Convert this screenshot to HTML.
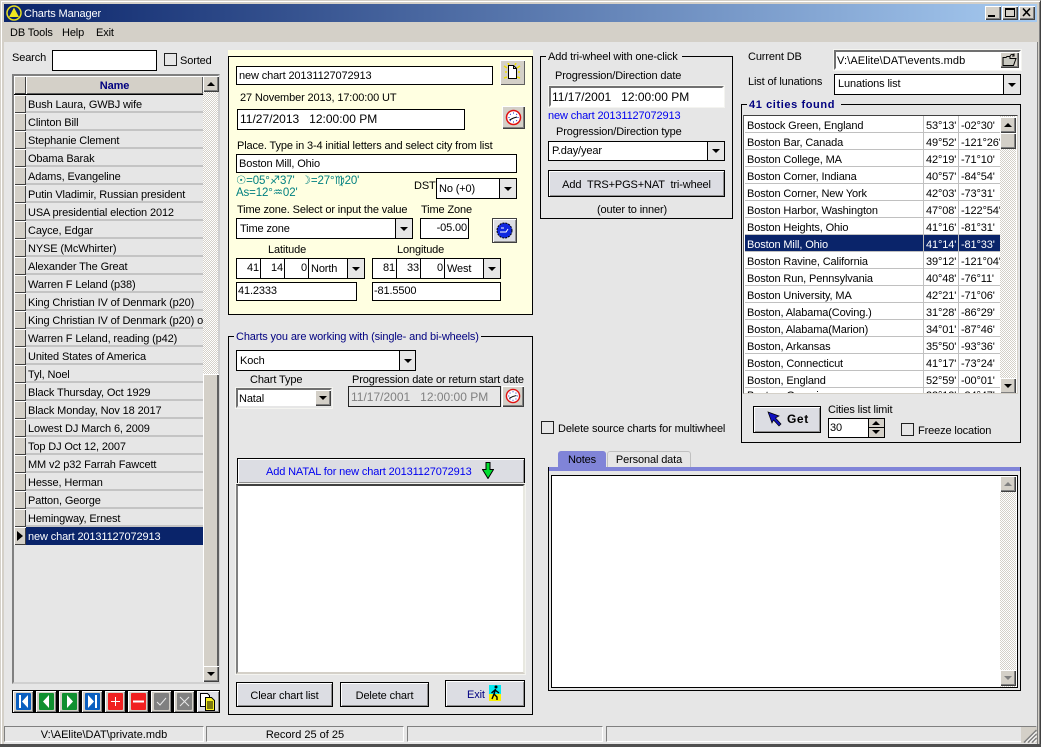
<!DOCTYPE html>
<html><head><meta charset="utf-8"><title>Charts Manager</title>
<style>
html,body{margin:0;padding:0}
body{width:1041px;height:747px;position:relative;overflow:hidden;background:#d4d0c8;font:11px/16px "Liberation Sans",Arial,sans-serif;letter-spacing:-.13px;color:#000}
div,svg{position:absolute;box-sizing:border-box}
.t{white-space:pre;height:16px}
.i{background:#fff;border:1px solid #000;white-space:pre;padding-left:2px;overflow:hidden}
.s{background:#fff;border:2px solid;border-color:#606060 #fff #fff #606060;outline:1px solid #f4f4f0;white-space:pre;padding-left:1px;overflow:hidden}
.r{background:#d4d0c8;box-shadow:inset 1px 1px #fff,inset -1px -1px #404040,inset -2px -2px #808080}
.b{background:#dcdde3;border:1px solid #000;box-shadow:inset 1px 1px #fff,inset -1px -1px #909090;text-align:center}
.g{border:1px solid #000}
.cb{background:#e6e6e6;border-left:1px solid #000}
.tri{width:0;height:0;border-left:4px solid transparent;border-right:4px solid transparent;border-top:4px solid #000}
.up{width:0;height:0;border-left:4px solid transparent;border-right:4px solid transparent;border-bottom:4px solid #000}
.d{background:repeating-conic-gradient(#fff 0 25%,#d4d0c8 0 50%) 0 0/2px 2px}
.n{left:26px;width:177px;height:18px;border-bottom:2px solid #c4c4c4;padding:2px 0 0 2px;white-space:pre;overflow:hidden}
.x{left:14px;width:12px;height:18px;background:#d4d0c8;box-shadow:inset 1px 1px #fff,inset -1px -1px #404040}
.c{height:17px;border-bottom:1px solid #c0c0c0;white-space:pre;overflow:hidden;padding:2px 0 0 2px;background:#fff}
.cl{width:1px;background:#c0c0c0}
.bt{background:#d4d0c8;width:22px;height:23px;top:690px;box-shadow:inset 1px 1px #fff,inset -1px -1px #808080;border:1px solid #000}
.st{height:16px;top:726px;border:1px solid;border-color:#808080 #fff #fff #808080;text-align:center;white-space:pre;letter-spacing:0;line-height:16px}
.dt{font-size:12px;letter-spacing:0}
</style></head><body>

<!-- frame -->
<div style="left:0;top:0;width:1041px;height:747px;border:1px solid;border-color:#d4d0c8 #404040 #404040 #d4d0c8;box-shadow:inset 1px 1px #fff,inset -1px -1px #808080"></div>
<!-- title -->
<div style="left:4px;top:4px;width:1033px;height:18px;background:linear-gradient(90deg,#0a246a,#a6caf0)"></div>
<svg style="left:6px;top:5px" width="16" height="16" viewBox="0 0 16 16"><circle cx="8" cy="8" r="7" fill="#0a246a" stroke="#e8e020" stroke-width="1.5"/><path d="M8 2.500L13 12H3Z" fill="#f0e820"/></svg>
<div class="t" style="left:24px;top:6px;color:#fff">Charts Manager</div>
<div class="r" style="left:985px;top:6px;width:16px;height:14px"></div><div style="left:988px;top:15px;width:7px;height:2px;background:#000"></div>
<div class="r" style="left:1002px;top:6px;width:16px;height:14px"></div><div style="left:1005px;top:8px;width:10px;height:9px;border:1px solid #000;border-top-width:2px"></div>
<div class="r" style="left:1019px;top:6px;width:16px;height:14px"></div>
<svg style="left:1022px;top:8px" width="10" height="9" viewBox="0 0 10 9"><path d="M1 0.500L8 8M8 0.500L1 8" stroke="#000" stroke-width="1.6" fill="none"/></svg>
<!-- menu -->
<div class="t" style="left:10px;top:25px">DB Tools</div>
<div class="t" style="left:62px;top:25px">Help</div>
<div class="t" style="left:96px;top:25px">Exit</div>
<!-- client -->
<div style="left:4px;top:42px;width:1033px;height:703px;background:#e6e6e6"></div>

<!-- search -->
<div class="t" style="left:12px;top:50px">Search</div>
<div class="i" style="left:52px;top:50px;width:105px;height:21px"></div>
<div class="g" style="left:164px;top:53px;width:13px;height:13px;border-color:#202020"></div>
<div class="t" style="left:180px;top:53px">Sorted</div>

<!-- grid -->
<div style="left:12px;top:74px;width:208px;height:610px;border:2px solid #808080;border-right-color:#d0d0d0;border-bottom-color:#d0d0d0"></div>
<div class="x" style="top:76px;height:18px"></div>
<div class="r" style="left:26px;top:76px;width:177px;height:18px;text-align:center;font-weight:bold;color:#000080;padding-top:2px;box-shadow:inset 1px 1px #fff,inset -1px -1px #606060">Name</div>
<div style="left:14px;top:94px;width:189px;height:1px;background:#000"></div>
<div class="d" style="left:203px;top:76px;width:15px;height:606px"></div>
<div class="r" style="left:203px;top:76px;width:16px;height:16px"></div><div class="up" style="left:207px;top:82px"></div>
<div class="r" style="left:203px;top:374px;width:16px;height:292px;box-shadow:inset 1px 1px #fff,inset -2px 0 #606060"></div>
<div class="r" style="left:203px;top:666px;width:16px;height:16px"></div><div class="tri" style="left:207px;top:672px"></div>

<div class="x" style="top:95px"></div><div class="n" style="top:95px">Bush Laura, GWBJ wife</div>
<div class="x" style="top:113px"></div><div class="n" style="top:113px">Clinton Bill</div>
<div class="x" style="top:131px"></div><div class="n" style="top:131px">Stephanie Clement</div>
<div class="x" style="top:149px"></div><div class="n" style="top:149px">Obama Barak</div>
<div class="x" style="top:167px"></div><div class="n" style="top:167px">Adams, Evangeline</div>
<div class="x" style="top:185px"></div><div class="n" style="top:185px">Putin Vladimir, Russian president</div>
<div class="x" style="top:203px"></div><div class="n" style="top:203px">USA presidential election 2012</div>
<div class="x" style="top:221px"></div><div class="n" style="top:221px">Cayce, Edgar</div>
<div class="x" style="top:239px"></div><div class="n" style="top:239px">NYSE (McWhirter)</div>
<div class="x" style="top:257px"></div><div class="n" style="top:257px">Alexander The Great</div>
<div class="x" style="top:275px"></div><div class="n" style="top:275px">Warren F Leland (p38)</div>
<div class="x" style="top:293px"></div><div class="n" style="top:293px">King Christian IV of Denmark (p20)</div>
<div class="x" style="top:311px"></div><div class="n" style="top:311px">King Christian IV of Denmark (p20) ol</div>
<div class="x" style="top:329px"></div><div class="n" style="top:329px">Warren F Leland, reading (p42)</div>
<div class="x" style="top:347px"></div><div class="n" style="top:347px">United States of America</div>
<div class="x" style="top:365px"></div><div class="n" style="top:365px">Tyl, Noel</div>
<div class="x" style="top:383px"></div><div class="n" style="top:383px">Black Thursday, Oct 1929</div>
<div class="x" style="top:401px"></div><div class="n" style="top:401px">Black Monday, Nov 18 2017</div>
<div class="x" style="top:419px"></div><div class="n" style="top:419px">Lowest DJ March 6, 2009</div>
<div class="x" style="top:437px"></div><div class="n" style="top:437px">Top DJ Oct 12, 2007</div>
<div class="x" style="top:455px"></div><div class="n" style="top:455px">MM v2 p32 Farrah Fawcett</div>
<div class="x" style="top:473px"></div><div class="n" style="top:473px">Hesse, Herman</div>
<div class="x" style="top:491px"></div><div class="n" style="top:491px">Patton, George</div>
<div class="x" style="top:509px"></div><div class="n" style="top:509px">Hemingway, Ernest</div>
<div class="x" style="top:527px"></div><div style="left:17px;top:531px;width:0;height:0;border-top:5px solid transparent;border-bottom:5px solid transparent;border-left:6px solid #000"></div>
<div class="n" style="top:527px;background:#0a246a;color:#fff;border-bottom:0">new chart 20131127072913</div>

<!-- nav -->
<div style="left:12px;top:690px;width:208px;height:23px;background:#000"></div>
<div class="bt" style="left:12px"></div><svg style="left:16px;top:693px" width="15" height="17" viewBox="0 0 15 17"><rect width="15" height="17" rx="1" fill="#0a5fc0"/><path d="M3 2h2v13H3zM12 2v13L6 8.500Z" fill="#fff"/></svg>
<div class="bt" style="left:35px"></div><svg style="left:39px;top:693px" width="15" height="17" viewBox="0 0 15 17"><rect width="15" height="17" rx="1" fill="#109030"/><path d="M10 2v13L4 8.500Z" fill="#fff"/></svg>
<div class="bt" style="left:58px"></div><svg style="left:62px;top:693px" width="15" height="17" viewBox="0 0 15 17"><rect width="15" height="17" rx="1" fill="#109030"/><path d="M5 2v13l6-6.500Z" fill="#fff"/></svg>
<div class="bt" style="left:81px"></div><svg style="left:85px;top:693px" width="15" height="17" viewBox="0 0 15 17"><rect width="15" height="17" rx="1" fill="#0a5fc0"/><path d="M10 2h2v13h-2zM3 2v13l6-6.500Z" fill="#fff"/></svg>
<div class="bt" style="left:104px"></div><svg style="left:108px;top:693px" width="15" height="17" viewBox="0 0 15 17"><rect width="15" height="17" rx="1" fill="#f02020"/><path d="M7 4h1v4h4v1H8v4H7V9H3V8h4Z" fill="#fff"/></svg>
<div class="bt" style="left:127px"></div><svg style="left:131px;top:693px" width="15" height="17" viewBox="0 0 15 17"><rect width="15" height="17" rx="1" fill="#f02020"/><path d="M2 7.500h11v2H2Z" fill="#fff"/></svg>
<div class="bt" style="left:150px"></div><svg style="left:154px;top:693px" width="15" height="17" viewBox="0 0 15 17"><rect width="15" height="17" rx="1" fill="#808080"/><path d="M3 9l3 3 6-7" stroke="#e8e8e8" fill="none"/></svg>
<div class="bt" style="left:173px"></div><svg style="left:177px;top:693px" width="15" height="17" viewBox="0 0 15 17"><rect width="15" height="17" rx="1" fill="#808080"/><path d="M3 4l9 9M12 4l-9 9" stroke="#e8e8e8" fill="none"/></svg>
<div class="bt" style="left:196px;width:24px;background:#dcdde3"></div>
<svg style="left:199px;top:692px" width="18" height="20" viewBox="0 0 18 20"><path d="M1.500 1.500h7l2 2v11h-9Z" fill="#fff" stroke="#000"/><path d="M6.500 5.500h6l3 3v10h-9Z" fill="#f8f020" stroke="#000"/><path d="M8 10h6M8 12h6M8 14h6M8 16h6" stroke="#000"/></svg>

<!-- yellow panel -->
<div style="left:228px;top:50px;width:305px;height:8px;background:#ffffe1"></div>
<div style="left:228px;top:56px;width:305px;height:259px;background:#ffffe1;border:1px solid #000"></div>
<div class="i" style="left:236px;top:66px;width:257px;height:19px;padding-top:1px">new chart 20131127072913</div>
<div class="b" style="left:500px;top:60px;width:25px;height:25px;background:#d4d0c8;border:0;box-shadow:inset 1px 1px #fff,inset -1px -1px #606060"></div>
<svg style="left:503px;top:63px" width="19" height="19" viewBox="0 0 19 19"><path d="M1 3l3 2M17 3l-3 2M1 15l3-1M17 15l-3-1M2 9h2M15 9h2M5 0l1 2M13 0l-1 2" stroke="#f0e000" stroke-width="1.500"/><path d="M5.500 2.500h5l3 3v10h-8Z" fill="#fff" stroke="#000"/><path d="M10.500 2.500v3h3" fill="none" stroke="#000"/></svg>
<div class="t" style="left:240px;top:90px">27 November 2013, 17:00:00 UT</div>
<div class="i dt" style="left:237px;top:109px;width:228px;height:21px;padding-top:1px">11/27/2013   12:00:00 PM</div>
<div class="r" style="left:502px;top:106px;width:23px;height:23px"></div>
<svg style="left:505px;top:109px" width="17" height="17" viewBox="0 0 17 17"><circle cx="8.500" cy="8.500" r="7" fill="#fff" stroke="#e01010" stroke-width="1.500"/><path d="M8.500 9L4.500 11M8.500 9L12 8" stroke="#000"/><path d="M8.500 3.500v1M8.500 12.500v1M3.500 8.500h1M12.500 8.500h1M5 5l.7.7M12 5l-.7.7M5 12l.7-.7M12 12l-.7-.7" stroke="#1020c0"/></svg>
<div class="t" style="left:237px;top:138px">Place. Type in 3-4 initial letters and select city from list</div>
<div class="i" style="left:236px;top:154px;width:281px;height:19px;padding-top:1px">Boston Mill, Ohio</div>
<div class="t" style="left:236px;top:173px;color:#008080;font-size:11.5px;font-family:'Liberation Sans','DejaVu Sans',sans-serif">☉=05°♐37'  ☽=27°♍20'</div>
<div class="t" style="left:236px;top:185px;color:#008080;font-size:11.5px;font-family:'Liberation Sans','DejaVu Sans',sans-serif">As=12°♒02'</div>
<div class="t" style="left:414px;top:178px">DST</div>
<div class="i" style="left:436px;top:178px;width:81px;height:21px;padding-top:2px">No (+0)<div class="cb" style="left:62px;top:0;width:17px;height:19px"><div class="tri" style="left:4px;top:8px"></div></div></div>
<div class="t" style="left:237px;top:202px">Time zone. Select or input the value</div>
<div class="t" style="left:421px;top:202px">Time Zone</div>
<div class="i" style="left:236px;top:218px;width:177px;height:21px;padding:2px 0 0 3px">Time zone<div class="cb" style="left:158px;top:0;width:17px;height:19px"><div class="tri" style="left:4px;top:8px"></div></div></div>
<div class="i" style="left:420px;top:218px;width:49px;height:21px;text-align:right;padding:1px 1px 0 0">-05.00</div>
<div class="b" style="left:492px;top:218px;width:25px;height:25px;border:1px solid #404040"></div>
<svg style="left:496px;top:222px" width="17" height="17" viewBox="0 0 17 17"><circle cx="8.500" cy="8.500" r="7.500" fill="#1028e0" stroke="#000" stroke-dasharray="2 1"/><path d="M4 10h6l2-3M5 6h3" stroke="#fff" fill="none"/></svg>
<div class="t" style="left:268px;top:242px">Latitude</div>
<div class="t" style="left:397px;top:242px">Longitude</div>

<div class="i" style="left:236px;top:258px;width:129px;height:21px"></div>
<div class="t" style="left:236px;top:260px;width:24px;text-align:right;padding-right:1px">41</div><div style="left:260px;top:258px;width:1px;height:21px;background:#000"></div>
<div class="t" style="left:260px;top:260px;width:24px;text-align:right;padding-right:1px">14</div><div style="left:284px;top:258px;width:1px;height:21px;background:#000"></div>
<div class="t" style="left:284px;top:260px;width:24px;text-align:right;padding-right:1px">0</div><div style="left:308px;top:258px;width:1px;height:21px;background:#000"></div>
<div class="t" style="left:311px;top:261px">North</div>
<div class="cb" style="left:347px;top:259px;width:17px;height:19px"><div class="tri" style="left:4px;top:8px"></div></div>

<div class="i" style="left:372px;top:258px;width:129px;height:21px"></div>
<div class="t" style="left:372px;top:260px;width:24px;text-align:right;padding-right:1px">81</div><div style="left:396px;top:258px;width:1px;height:21px;background:#000"></div>
<div class="t" style="left:396px;top:260px;width:24px;text-align:right;padding-right:1px">33</div><div style="left:420px;top:258px;width:1px;height:21px;background:#000"></div>
<div class="t" style="left:420px;top:260px;width:24px;text-align:right;padding-right:1px">0</div><div style="left:444px;top:258px;width:1px;height:21px;background:#000"></div>
<div class="t" style="left:447px;top:261px">West</div>
<div class="cb" style="left:483px;top:259px;width:17px;height:19px"><div class="tri" style="left:4px;top:8px"></div></div>

<div class="i" style="left:236px;top:282px;width:121px;height:19px;padding:0 0 0 1px">41.2333</div>
<div class="i" style="left:372px;top:282px;width:129px;height:19px;padding:0 0 0 1px">-81.5500</div>

<!-- charts group -->
<div class="g" style="left:228px;top:336px;width:305px;height:379px"></div>
<div class="t" style="left:234px;top:330px;padding:0 2px;background:#e6e6e6;color:#000080;height:14px;line-height:14px">Charts you are working with (single- and bi-wheels)</div>
<div class="i" style="left:236px;top:350px;width:180px;height:21px;padding:2px 0 0 3px">Koch<div class="cb" style="left:162px;top:0;width:16px;height:19px"><div class="tri" style="left:4px;top:8px"></div></div></div>
<div class="t" style="left:250px;top:372px">Chart Type</div>
<div class="s" style="left:236px;top:388px;width:96px;height:20px;border-color:#707070 #e6e6e6 #e6e6e6 #707070;padding:1px 0 0 1px">Natal</div>
<div class="r" style="left:315px;top:390px;width:16px;height:16px"></div><div class="tri" style="left:319px;top:396px"></div>
<div class="t" style="left:352px;top:372px">Progression date or return start date</div>
<div class="i dt" style="left:348px;top:386px;width:153px;height:21px;background:#e6e6e6;color:#808080;padding-top:2px;border-color:#222">11/17/2001   12:00:00 PM</div>
<div class="r" style="left:502px;top:386px;width:22px;height:21px"></div>
<svg style="left:505px;top:388px" width="16" height="16" viewBox="0 0 17 17"><circle cx="8.500" cy="8.500" r="7" fill="#fff" stroke="#e01010" stroke-width="1.500"/><path d="M8.500 9L4.500 11M8.500 9L12 8" stroke="#000"/><path d="M8.500 3.500v1M8.500 12.500v1M3.500 8.500h1M12.500 8.500h1M5 5l.7.7M12 5l-.7.7M5 12l.7-.7M12 12l-.7-.7" stroke="#1020c0"/></svg>
<div class="b" style="left:237px;top:458px;width:288px;height:26px;text-align:left;padding:5px 0 0 28px;color:#0000f0">Add NATAL for new chart 20131127072913</div>
<svg style="left:482px;top:462px" width="12" height="17" viewBox="0 0 12 17"><path d="M4 .5h4v7h3.500L6 16.500.5 7.500H4Z" fill="#00e030" stroke="#000"/></svg>
<div class="s" style="left:236px;top:484px;width:289px;height:190px;border-color:#404040 #e8e8e0 #d4d0c8 #808080"></div>
<div class="b" style="left:236px;top:682px;width:97px;height:25px;padding-top:5px">Clear chart list</div>
<div class="b" style="left:340px;top:682px;width:89px;height:25px;padding-top:5px">Delete chart</div>
<div class="b" style="left:445px;top:680px;width:80px;height:27px;text-align:left;padding:6px 0 0 21px;color:#000080">Exit</div>
<svg style="left:489px;top:685px" width="12" height="16" viewBox="0 0 12 16"><rect width="12" height="9" fill="#00e8f0"/><rect y="9" width="12" height="7" fill="#f8f000"/><circle cx="7" cy="2" r="1.500" fill="#000"/><path d="M6.500 4L5 9l3 3v3M5 9l-2 5M6 5L2.500 8M6 5l4 3" stroke="#000" stroke-width="1.400" fill="none"/></svg>

<!-- tri-wheel group -->
<div class="g" style="left:540px;top:56px;width:193px;height:163px"></div>
<div class="t" style="left:546px;top:50px;padding:0 4px 0 2px;background:#e6e6e6;height:14px;line-height:14px">Add tri-wheel with one-click</div>
<div class="t" style="left:555px;top:68px">Progression/Direction date</div>
<div class="s dt" style="left:549px;top:86px;width:175px;height:21px;padding-top:1px;border-color:#707070 #fff #fff #707070">11/17/2001   12:00:00 PM</div>
<div class="t" style="left:548px;top:108px;color:#0000f0">new chart 20131127072913</div>
<div class="t" style="left:556px;top:124px">Progression/Direction type</div>
<div class="i" style="left:548px;top:141px;width:177px;height:20px;padding:1px 0 0 3px">P.day/year<div class="cb" style="left:158px;top:0;width:17px;height:18px"><div class="tri" style="left:4px;top:7px"></div></div></div>
<div class="b" style="left:548px;top:170px;width:177px;height:27px;padding-top:6px;white-space:pre">Add  TRS+PGS+NAT  tri-wheel</div>
<div class="t" style="left:597px;top:202px">(outer to inner)</div>

<div class="g" style="left:541px;top:421px;width:13px;height:13px;border-color:#202020"></div>
<div class="t" style="left:558px;top:421px">Delete source charts for multiwheel</div>

<!-- tabs -->
<div style="left:558px;top:451px;width:48px;height:16px;background:#8084d8;border-radius:3px 3px 0 0;text-align:center;padding-top:1px">Notes</div>
<div style="left:607px;top:451px;width:84px;height:16px;border:1px solid #c0c0c0;border-bottom:0;border-radius:3px 3px 0 0;text-align:center">Personal data</div>
<div style="left:548px;top:467px;width:473px;height:4px;background:#8084d8"></div>
<div style="left:548px;top:467px;width:473px;height:224px;border:1px solid #000;border-top:0"></div>
<div style="left:551px;top:475px;width:467px;height:213px;border:1px solid #000;background:#fff"></div>
<div class="d" style="left:1000px;top:476px;width:16px;height:211px"></div>
<div class="r" style="left:1000px;top:476px;width:16px;height:16px"></div><div class="up" style="left:1004px;top:482px;border-bottom-color:#808080"></div>
<div class="r" style="left:1000px;top:670px;width:16px;height:16px"></div><div class="tri" style="left:1004px;top:676px;border-top-color:#808080"></div>

<!-- right top -->
<div class="t" style="left:748px;top:49px">Current DB</div>
<div class="s" style="left:834px;top:50px;width:187px;height:20px;letter-spacing:.1px;padding-top:1px;border-color:#707070 #fff #fff #707070">V:\AElite\DAT\events.mdb</div>
<div class="r" style="left:1000px;top:52px;width:19px;height:16px"></div>
<svg style="left:1002px;top:53px" width="15" height="14" viewBox="0 0 15 14"><path d="M1 12.500V4.500h3l1-1h3v2h6l-2.500 7Z" fill="#c8c8c0" stroke="#000"/><path d="M8 3c1-2 3-2 4-1M12 .5V3h-2" stroke="#000" fill="none"/></svg>
<div class="t" style="left:748px;top:74px">List of lunations</div>
<div class="i" style="left:834px;top:74px;width:187px;height:21px;padding:1px 0 0 3px">Lunations list<div class="cb" style="left:168px;top:0;width:17px;height:19px"><div class="tri" style="left:4px;top:8px"></div></div></div>

<!-- cities group -->
<div class="g" style="left:741px;top:104px;width:280px;height:339px"></div>
<div class="t" style="left:747px;top:98px;padding:0 6px 0 2px;background:#e6e6e6;color:#000080;font-weight:bold;letter-spacing:.6px;height:14px;line-height:14px">41 cities found</div>
<div style="left:743px;top:115px;width:275px;height:279px;background:#fff;border:1px solid;border-color:#404040 #d4d0c8 #d4d0c8 #606060;overflow:hidden">
<div class="c" style="left:1px;top:0;width:255px">Bostock Green, England</div>
<div class="c" style="left:1px;top:17px;width:255px">Boston Bar, Canada</div>
<div class="c" style="left:1px;top:34px;width:255px">Boston College, MA</div>
<div class="c" style="left:1px;top:51px;width:255px">Boston Corner, Indiana</div>
<div class="c" style="left:1px;top:68px;width:255px">Boston Corner, New York</div>
<div class="c" style="left:1px;top:85px;width:255px">Boston Harbor, Washington</div>
<div class="c" style="left:1px;top:102px;width:255px">Boston Heights, Ohio</div>
<div class="c" style="left:1px;top:119px;width:255px;background:#0a246a;color:#fff">Boston Mill, Ohio</div>
<div class="c" style="left:1px;top:136px;width:255px">Boston Ravine, California</div>
<div class="c" style="left:1px;top:153px;width:255px">Boston Run, Pennsylvania</div>
<div class="c" style="left:1px;top:170px;width:255px">Boston University, MA</div>
<div class="c" style="left:1px;top:187px;width:255px">Boston, Alabama(Coving.)</div>
<div class="c" style="left:1px;top:204px;width:255px">Boston, Alabama(Marion)</div>
<div class="c" style="left:1px;top:221px;width:255px">Boston, Arkansas</div>
<div class="c" style="left:1px;top:238px;width:255px">Boston, Connecticut</div>
<div class="c" style="left:1px;top:255px;width:255px">Boston, England</div>
<div class="c" style="left:1px;top:272px;width:255px;padding-top:0">Boston, Georgia</div>
<div class="cl" style="left:179px;top:0;height:279px"></div>
<div class="cl" style="left:214px;top:0;height:279px"></div>
<div style="left:0;top:1px">
<div class="t" style="left:182px;top:1px">53°13'</div><div class="t" style="left:217px;top:1px;width:39px;overflow:hidden">-02°30'</div>
<div class="t" style="left:182px;top:18px">49°52'</div><div class="t" style="left:217px;top:18px;width:39px;overflow:hidden">-121°26'</div>
<div class="t" style="left:182px;top:35px">42°19'</div><div class="t" style="left:217px;top:35px;width:39px;overflow:hidden">-71°10'</div>
<div class="t" style="left:182px;top:52px">40°57'</div><div class="t" style="left:217px;top:52px;width:39px;overflow:hidden">-84°54'</div>
<div class="t" style="left:182px;top:69px">42°03'</div><div class="t" style="left:217px;top:69px;width:39px;overflow:hidden">-73°31'</div>
<div class="t" style="left:182px;top:86px">47°08'</div><div class="t" style="left:217px;top:86px;width:39px;overflow:hidden">-122°54'</div>
<div class="t" style="left:182px;top:103px">41°16'</div><div class="t" style="left:217px;top:103px;width:39px;overflow:hidden">-81°31'</div>
<div class="t" style="left:182px;top:120px;color:#fff">41°14'</div><div class="t" style="left:217px;top:120px;width:39px;overflow:hidden;color:#fff">-81°33'</div>
<div class="t" style="left:182px;top:137px">39°12'</div><div class="t" style="left:217px;top:137px;width:39px;overflow:hidden">-121°04'</div>
<div class="t" style="left:182px;top:154px">40°48'</div><div class="t" style="left:217px;top:154px;width:39px;overflow:hidden">-76°11'</div>
<div class="t" style="left:182px;top:171px">42°21'</div><div class="t" style="left:217px;top:171px;width:39px;overflow:hidden">-71°06'</div>
<div class="t" style="left:182px;top:188px">31°28'</div><div class="t" style="left:217px;top:188px;width:39px;overflow:hidden">-86°29'</div>
<div class="t" style="left:182px;top:205px">34°01'</div><div class="t" style="left:217px;top:205px;width:39px;overflow:hidden">-87°46'</div>
<div class="t" style="left:182px;top:222px">35°50'</div><div class="t" style="left:217px;top:222px;width:39px;overflow:hidden">-93°36'</div>
<div class="t" style="left:182px;top:239px">41°17'</div><div class="t" style="left:217px;top:239px;width:39px;overflow:hidden">-73°24'</div>
<div class="t" style="left:182px;top:256px">52°59'</div><div class="t" style="left:217px;top:256px;width:39px;overflow:hidden">-00°01'</div>
<div class="t" style="left:182px;top:271px">33°12'</div><div class="t" style="left:217px;top:271px;width:39px;overflow:hidden">-84°47'</div>
</div>
<div class="d" style="left:256px;top:0;width:16px;height:277px"></div>
<div class="r" style="left:256px;top:1px;width:16px;height:16px"></div><div class="up" style="left:260px;top:7px"></div>
<div class="r" style="left:256px;top:17px;width:16px;height:16px"></div>
<div class="r" style="left:256px;top:262px;width:16px;height:16px"></div><div class="tri" style="left:260px;top:268px"></div>
</div>
<div class="b" style="left:753px;top:406px;width:68px;height:27px"></div>
<svg style="left:767px;top:411px" width="16" height="16" viewBox="0 0 16 16"><path d="M1 1l11 4-3.500 2 5.500 6-2 2-5.500-6L5 12Z" fill="#1010c0" stroke="#000" stroke-width=".7"/></svg>
<div class="t" style="left:787px;top:411px;font-weight:bold;letter-spacing:.6px;font-size:12px">Get</div>
<div class="t" style="left:828px;top:402px">Cities list limit</div>
<div class="i" style="left:828px;top:418px;width:57px;height:20px;padding:1px 0 0 1px">30</div>
<div style="left:868px;top:419px;width:16px;height:18px;background:#d4d0c8;border-left:1px solid #000"></div>
<div style="left:868px;top:427px;width:16px;height:1px;background:#000"></div>
<div class="up" style="left:872px;top:421px"></div><div class="tri" style="left:872px;top:430px"></div>
<div class="g" style="left:901px;top:423px;width:13px;height:13px;border-color:#202020"></div>
<div class="t" style="left:918px;top:423px">Freeze location</div>

<!-- status -->
<div class="st" style="left:4px;width:200px;">V:\AElite\DAT\private.mdb</div>
<div class="st" style="left:206px;width:198px">Record 25 of 25</div>
<div class="st" style="left:407px;width:196px"></div>
<div class="st" style="left:606px;width:431px"></div>
<div style="left:1021px;top:727px;width:16px;height:16px;background:#d4d0c8"></div>
<svg style="left:1023px;top:729px" width="14" height="14" viewBox="0 0 14 14"><path d="M13.500 1L1 13.500M13.500 5L5 13.500M13.500 9L9 13.500" stroke="#808080" stroke-width="1.500"/><path d="M13.500 3L3 13.500M13.500 7L7 13.500M13.500 11L11 13.500" stroke="#fff"/></svg>
<div style="left:1037px;top:42px;width:1px;height:702px;background:#808080"></div>
<div style="left:0;top:744px;width:1041px;height:3px;background:#505050"></div>
</body></html>
